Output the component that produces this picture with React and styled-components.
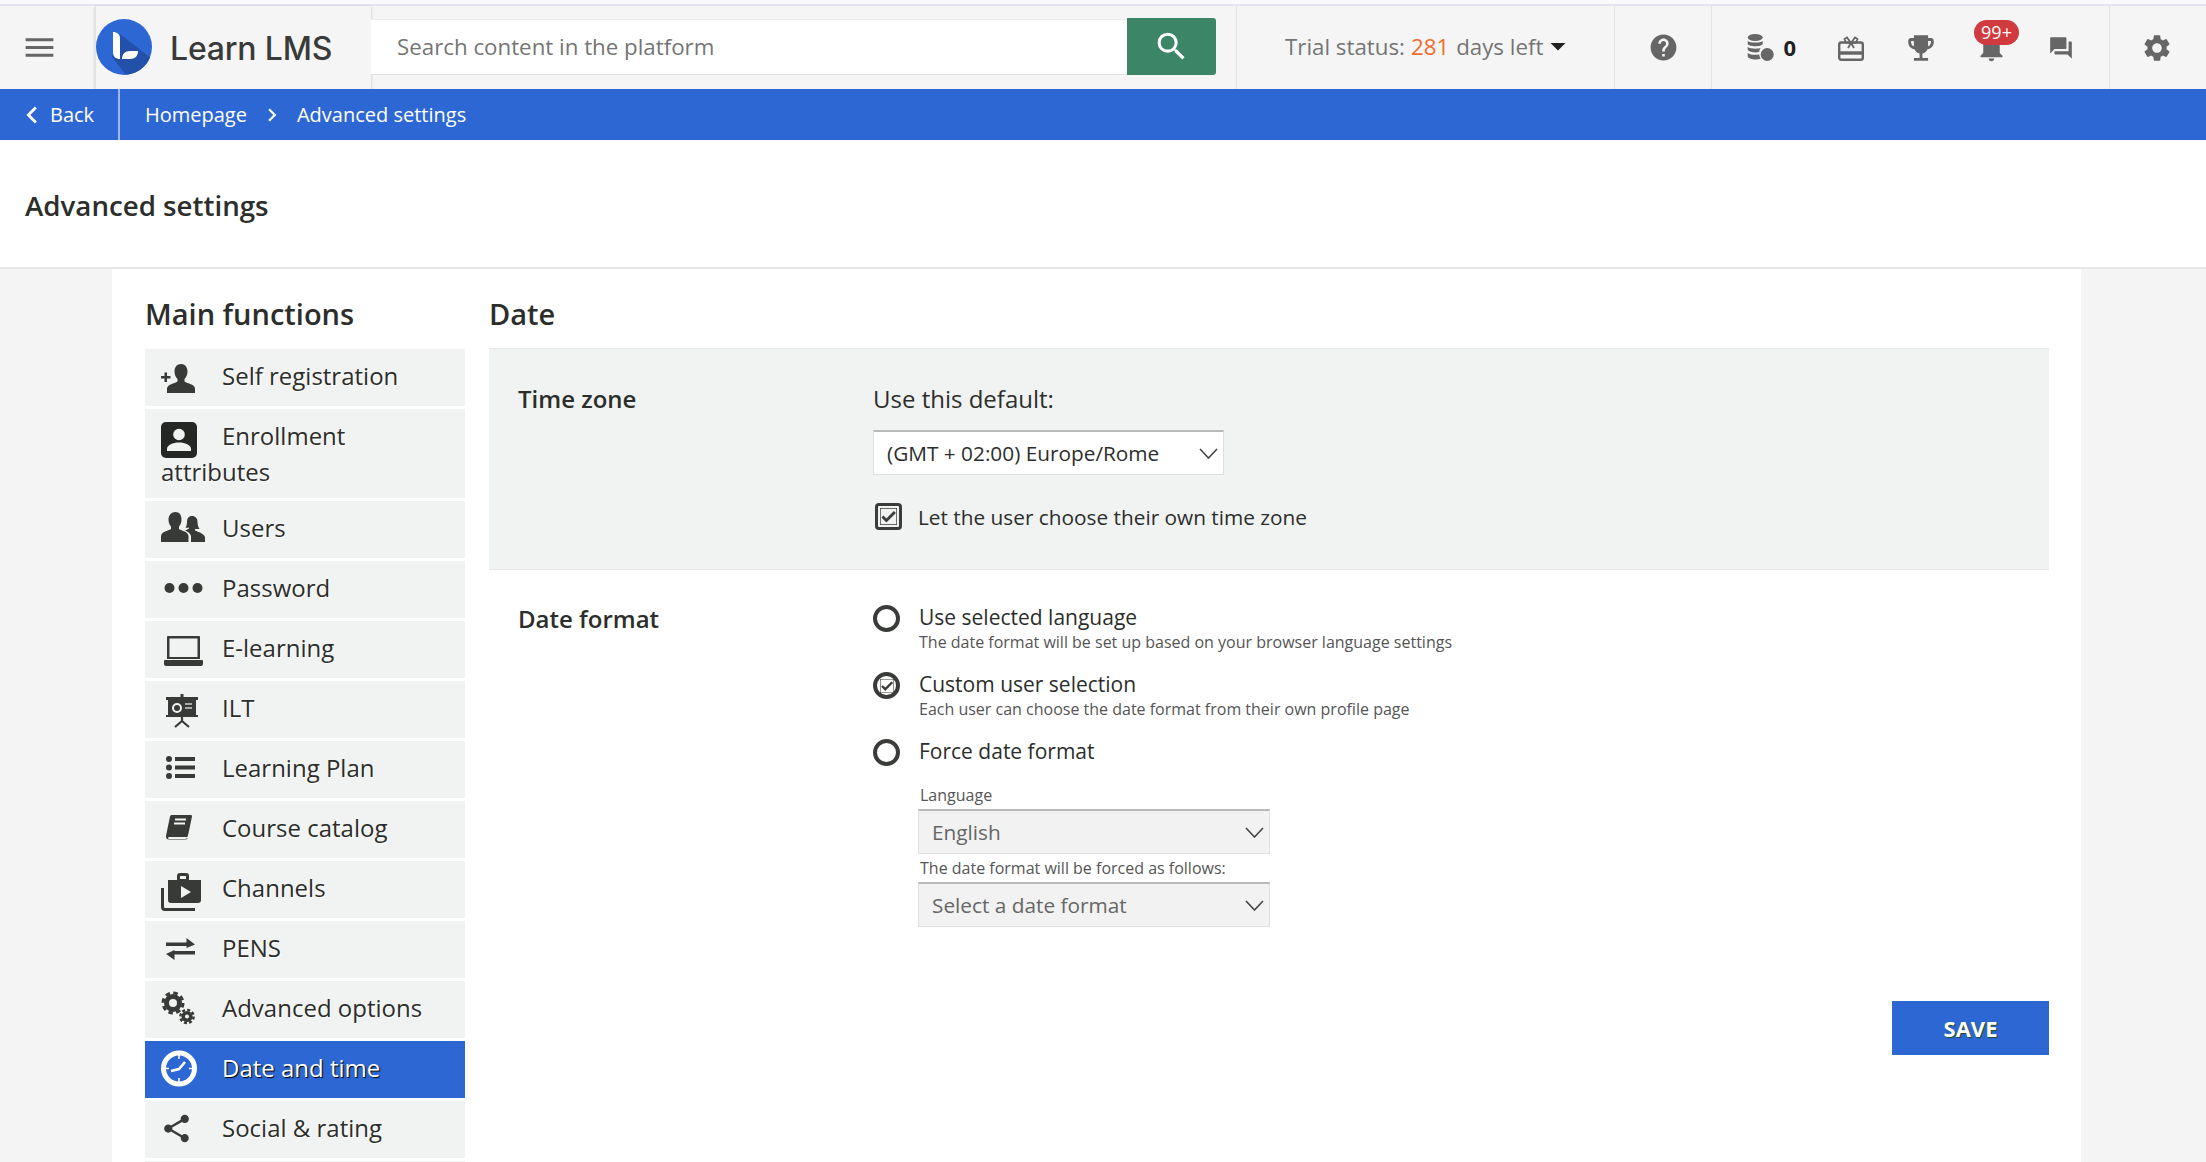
import styled, { createGlobalStyle } from "styled-components";
import {
  MdMenu,
  MdSearch,
  MdHelp,
  MdNotifications,
  MdForum,
  MdSettings,
  MdEmojiEvents,
  MdShare,
  MdCheck,
  MdArrowDropDown,
  MdChevronLeft,
  MdChevronRight,
} from "react-icons/md";

const GlobalStyle = createGlobalStyle`
  html, body {
    margin: 0;
    padding: 0;
    height: 100%;
    overflow: hidden;
    background: #f4f4f5;
  }
  * {
    box-sizing: border-box;
  }
  body {
    font-family: "Open Sans", "Liberation Sans", sans-serif;
    color: #2c2e2b;
  }
`;

const Page = styled.div`
  width: 2206px;
  height: 1162px;
  overflow: hidden;
  display: flex;
  flex-direction: column;
`;

const TopStripe = styled.div`
  height: 6px;
  flex: none;
  background: #fafafd;
  border-bottom: 2px solid #e5e5f0;
`;

const Header = styled.header`
  height: 83px;
  flex: none;
  display: flex;
  background: #f5f5f6;
`;

const MenuButton = styled.div`
  width: 95px;
  flex: none;
  display: flex;
  align-items: center;
  padding-left: 21px;
  color: #666;
`;

const LogoBox = styled.div`
  width: 276px;
  flex: none;
  display: flex;
  align-items: center;
  gap: 18px;
  padding-left: 0;
  padding-bottom: 1px;
  border-left: 1px solid #e2e2e2;
  box-shadow: 0 1px 3px rgba(0, 0, 0, 0.2);
`;

const LogoText = styled.span`
  font-family: Inter, "Open Sans", sans-serif;
  font-size: 32px;
  font-weight: 500;
  letter-spacing: -0.2px;
  color: #3a3a3a;
  padding-top: 2px;
`;

const SearchArea = styled.div`
  width: 866px;
  flex: none;
  display: flex;
  align-items: center;
  padding-right: 20px;
  padding-bottom: 2px;
  border-right: 1px solid #e4e4e4;
`;

const SearchInput = styled.div`
  flex: 1;
  height: 56px;
  background: #fff;
  border-bottom: 1px solid #e2e2e2;
  border-top: 1px solid #ececec;
  display: flex;
  align-items: center;
  padding-left: 26px;
  font-size: 22.3px;
  color: #757575;
`;

const SearchButton = styled.div`
  width: 89px;
  height: 57px;
  background: #3c8567;
  border-radius: 0 3px 3px 0;
  color: #fff;
  display: flex;
  align-items: center;
  justify-content: center;
`;

const TrialArea = styled.div`
  width: 378px;
  flex: none;
  display: flex;
  align-items: center;
  padding-left: 48px;
  padding-bottom: 3px;
  border-right: 1px solid #e4e4e4;
  font-size: 22.3px;
  color: #757575;
  white-space: nowrap;
`;

const TrialDays = styled.span`
  color: #ee6c2e;
  margin: 0 7px 0 6px;
`;

const Caret = styled.span`
  display: flex;
  color: #222;
  margin-left: -3px;
`;

const HelpArea = styled.div`
  width: 97px;
  flex: none;
  display: flex;
  align-items: center;
  justify-content: center;
  color: #666;
  border-right: 1px solid #e4e4e4;
`;

const ToolArea = styled.div`
  width: 398px;
  flex: none;
  display: flex;
  align-items: center;
  padding-left: 34px;
  color: #666;
  border-right: 1px solid #e4e4e4;
`;

const CoinGroup = styled.div`
  width: 50px;
  margin-right: 20px;
  flex: none;
  display: flex;
  align-items: center;
  gap: 9px;
`;

const CoinCount = styled.span`
  font-size: 22px;
  font-weight: 700;
  color: #1f211e;
  margin-bottom: 2px;
`;

const ToolItem = styled.div`
  width: 70px;
  flex: none;
  display: flex;
  justify-content: center;
  position: relative;
`;

const Badge = styled.span`
  position: absolute;
  top: -11px;
  left: 18px;
  width: 45px;
  height: 25px;
  border-radius: 13px;
  background: #d13a3e;
  color: #fff;
  font-size: 18px;
  line-height: 25px;
  text-align: center;
`;

const SettingsArea = styled.div`
  flex: 1;
  display: flex;
  align-items: center;
  justify-content: center;
  padding-right: 2px;
  color: #666;
`;

const BlueBar = styled.nav`
  height: 51px;
  flex: none;
  display: flex;
  align-items: center;
  background: #2d67d3;
  color: #fff;
  font-size: 20px;
`;

const BackLink = styled.div`
  width: 120px;
  height: 100%;
  flex: none;
  display: flex;
  align-items: center;
  gap: 1px;
  padding-left: 15px;
  border-right: 2px solid #9db8e8;
`;

const Crumbs = styled.div`
  display: flex;
  align-items: center;
  gap: 12px;
  padding-left: 25px;
`;

const TitleBar = styled.div`
  height: 129px;
  flex: none;
  display: flex;
  align-items: center;
  padding: 2px 0 0 25px;
  background: #fff;
  border-bottom: 2px solid #e8e8e8;
`;

const PageTitle = styled.h1`
  margin: 0;
  font-size: 27.7px;
  font-weight: 600;
`;

const Panel = styled.main`
  flex: 1;
  margin: 0 125px 0 112px;
  padding: 0 32px 0 33px;
  background: #fff;
  display: flex;
  gap: 24px;
  min-height: 0;
`;

const SideColumn = styled.aside`
  width: 320px;
  flex: none;
`;

const SectionHeading = styled.h2`
  margin: 0;
  height: 79px;
  padding-top: 27px;
  font-size: 29px;
  line-height: 36px;
  font-weight: 600;
`;

const SideList = styled.div`
  display: flex;
  flex-direction: column;
  gap: 3px;
  margin-top: 1px;
`;

const SideItem = styled.div`
  padding: 9px 12px 8px 16px;
  min-height: 57px;
  font-size: 24px;
  line-height: 36px;
  background: ${(props) => (props.$active ? "#2d67d3" : "#f1f3f3")};
  color: ${(props) => (props.$active ? "#fff" : "#2c2e2b")};
  text-shadow: ${(props) =>
    props.$active ? "1px 1px 1px #000" : "1px 1px 0 #fff"};
`;

const IconSlot = styled.span`
  display: inline-block;
  vertical-align: top;
  width: 61px;
  height: 36px;
  padding-top: ${(props) => props.$top || 0}px;
  padding-left: ${(props) => props.$left || 0}px;
  color: #383a37;

  svg {
    display: block;
    overflow: visible;
  }
`;

const MainColumn = styled.section`
  flex: 1;
  min-width: 0;
`;

const FormRow = styled.div`
  display: grid;
  grid-template-columns: 384px 1fr;
  background: ${(props) => (props.$shaded ? "#f1f3f3" : "transparent")};
  border-top: ${(props) => (props.$shaded ? "1px solid #e6e8e8" : "none")};
  border-bottom: ${(props) => (props.$shaded ? "1px solid #e6e8e8" : "none")};
  padding-top: ${(props) => props.$pad}px;
  padding-bottom: ${(props) => (props.$shaded ? 39 : 0)}px;
`;

const RowLabel = styled.div`
  padding-left: 29px;
  font-size: 24px;
  line-height: 32px;
  font-weight: 600;
`;

const FieldTitle = styled.div`
  font-size: 24px;
  line-height: 32px;
`;

const SelectBox = styled.div`
  width: ${(props) => props.$width}px;
  height: 45px;
  display: flex;
  align-items: center;
  justify-content: space-between;
  padding: 0 5px 0 ${(props) => props.$inset}px;
  border: 1px solid #e0e0e0;
  border-top: 2px solid #b9b9b9;
  background: ${(props) => (props.$muted ? "#f2f2f2" : "#fff")};
  color: ${(props) => (props.$muted ? "#666" : "#2c2e2b")};
  font-size: 20.8px;
`;

const TimezoneSelect = styled(SelectBox)`
  margin-top: 15px;
`;

const CheckRow = styled.label`
  display: flex;
  align-items: center;
  gap: 16px;
  margin-top: 28px;
  padding-left: 2px;
  font-size: 20.8px;
  line-height: 26px;
`;

const CheckBox = styled.span`
  width: 27px;
  height: 27px;
  display: flex;
  align-items: center;
  justify-content: center;
  border: 3.5px solid #3a3c39;
  border-radius: 4px;
  color: #3a3c39;

  svg {
    stroke: currentColor;
    stroke-width: 2;
  }
`;

const OptionList = styled.div`
  display: flex;
  flex-direction: column;
  gap: 17px;
`;

const Option = styled.div`
  display: grid;
  grid-template-columns: 46px 1fr;
`;

const Radio = styled.span`
  width: 27px;
  height: 27px;
  margin-top: 2px;
  display: flex;
  align-items: center;
  justify-content: center;
  border: 4px solid #3a3c39;
  border-radius: 50%;
  color: #3a3c39;

  svg {
    stroke: currentColor;
    stroke-width: 2;
  }
`;

const OptionText = styled.div`
  font-size: 21px;
  line-height: 28px;
`;

const OptionHint = styled.div`
  font-size: 16px;
  line-height: 22px;
  color: #555;
`;

const ForcedFields = styled.div`
  display: flex;
  flex-direction: column;
  margin: 15px 0 0 45px;
`;

const FieldHint = styled.div`
  padding: 3px 0 3px 2px;
  font-size: 16px;
  line-height: 22px;
  color: #555;
`;

const FooterRow = styled.div`
  display: flex;
  justify-content: flex-end;
  margin-top: 74px;
`;

const SaveButton = styled.button`
  width: 157px;
  height: 54px;
  border: 0;
  background: #2d67d3;
  color: #fff;
  font-family: inherit;
  font-size: 22px;
  font-weight: 700;
  text-shadow: 1px 1px 1px #1f4a2a;
`;

const Chevron = () => (
  <svg width="19" height="11" viewBox="0 0 19 11" fill="none" stroke="#444" strokeWidth="1.6">
    <polyline points="1,1 9.5,10 18,1" />
  </svg>
);

const Logo = () => (
  <svg width="56" height="56" viewBox="0 0 56 56">
    <defs>
      <clipPath id="logoClip">
        <circle cx="28" cy="28" r="28" />
      </clipPath>
    </defs>
    <circle cx="28" cy="28" r="28" fill="#2d67d3" />
    <polygon points="24,15 56,40 56,56 30,56 16,38" fill="#2350a8" clipPath="url(#logoClip)" />
    <path d="M17 13c4 0 7 2 7 7v20c-4 0-7-2-7-7z" fill="#fff" />
    <path d="M26 40c0-5 3-8 8-8h8c0 5-3 8-8 8z" fill="#fff" />
  </svg>
);

const CoinsIcon = () => (
  <svg width="29" height="28" viewBox="0 0 28 28" fill="currentColor">
    <ellipse cx="9" cy="3.5" rx="7.5" ry="3.5" />
    <path d="M1.5 7c2 2 13 2 15 0v3c-1 3-14 3-15 0z" />
    <path d="M1.5 13c2 2 11 2 13 1-1 1-1.500 3-1.500 4-4 1-10 0-11.500-2z" />
    <path d="M1.500 19c2 2 8 2 11.500 1.500 0 1 .5 2.500 1.500 4-4 2-12 1-13-2z" />
    <circle cx="21" cy="20.500" r="6.500" />
  </svg>
);

const GiftIcon = () => (
  <svg width="26" height="26" viewBox="0 0 26 26" fill="none" stroke="currentColor" strokeWidth="2.400">
    <rect x="1.200" y="7.500" width="23.600" height="17.300" rx="2" />
    <path d="M1.500 18h23" strokeWidth="3.500" />
    <path d="M13 8L9 2.500 6.500 4 8 7.500zM13 8l4-5.500 2.500 1.500L18 7.500zM13 8l-3 5M13 8l3 5" strokeWidth="1.800" />
  </svg>
);

const AddUserIcon = () => (
  <svg width="34" height="29" viewBox="0 0 34 29" fill="currentColor">
    <path d="M20 0c4 0 6.500 3 6.500 7.500 0 3-1.200 6-3 7.500v2.500c3 2 10.500 3 10.500 7V29H6v-4.500c0-4 7.500-5 10.500-7V15c-1.800-1.500-3-4.500-3-7.500C13.500 3 16 0 20 0z" />
    <path d="M0 12h3.500V8.500h2.500V12h3.500v2.500H6V18H3.500v-3.500H0z" />
  </svg>
);

const ProfileIcon = () => (
  <svg width="36" height="36" viewBox="0 0 36 36">
    <rect width="36" height="36" rx="5" fill="#252724" />
    <circle cx="18" cy="12.500" r="5.800" fill="#f1f3f3" />
    <path d="M6 29v-2c0-4 6-6.500 12-6.500S30 23 30 27v2z" fill="#f1f3f3" />
  </svg>
);

const UsersIcon = () => (
  <svg width="44" height="30" viewBox="0 0 44 30" fill="currentColor">
    <path d="M14.500 0c4 0 6 3 6 7.500 0 3-1 5.500-2.500 7v2.500c3 2 9 2.500 9.500 7v6H0v-6c.5-4.500 7-5 10-7v-2.500C8.500 13 7.500 10.500 7.500 7.500 7.500 3 10.500 0 14.500 0z" />
    <path d="M31 4c3.500 0 5.500 2.500 5.500 6 0 3 1 5.500 2 7h-4.500v1.500c3 1.500 9.500 3 10 7V30H30v-6c-.5-2.500-3-4.500-6-5.500 1.500-.5 3-1.200 4-2v-1c-1 .2-2.500.5-3.500.3 1-1.500 1.500-4 1.500-5.800C26 6.500 27.500 4 31 4z" />
  </svg>
);

const DotsIcon = () => (
  <svg width="39" height="12" viewBox="0 0 39 12" fill="currentColor">
    <circle cx="5.500" cy="6" r="5" />
    <circle cx="19.500" cy="6" r="5" />
    <circle cx="33.500" cy="6" r="5" />
  </svg>
);

const LaptopIcon = () => (
  <svg width="39" height="30" viewBox="0 0 39 30" fill="currentColor">
    <path d="M4 0h31a1 1 0 0 1 1 1v22H3V1a1 1 0 0 1 1-1zm1.500 2.500V21h28V2.500z" fillRule="evenodd" />
    <path d="M1 24h37a1 1 0 0 1 1 1v3a2 2 0 0 1-2 2H2a2 2 0 0 1-2-2v-3a1 1 0 0 1 1-1z" />
  </svg>
);

const BoardIcon = () => (
  <svg width="32" height="33" viewBox="0 0 32 33">
    <rect x="14.500" y="0" width="3" height="4" fill="currentColor" />
    <rect x="0" y="3" width="32" height="3" fill="currentColor" />
    <rect x="2" y="5" width="28" height="17" fill="currentColor" />
    <circle cx="11" cy="14" r="4" fill="none" stroke="#f1f3f3" strokeWidth="2" />
    <path d="M19 10h7M19 14h7" stroke="#aaa" strokeWidth="1.800" />
    <path d="M0 22h32M16 22v5M16 27l-7 6M16 27l7 6" stroke="currentColor" strokeWidth="2.200" />
  </svg>
);

const ListIcon = () => (
  <svg width="29" height="23" viewBox="0 0 29 23" fill="currentColor">
    <circle cx="3" cy="3" r="3" />
    <circle cx="3" cy="11.500" r="3" />
    <circle cx="3" cy="20" r="3" />
    <rect x="9" y="1" width="20" height="4" />
    <rect x="9" y="9.500" width="20" height="4" />
    <rect x="9" y="18" width="20" height="4" />
  </svg>
);

const BookIcon = () => (
  <svg width="26" height="25" viewBox="0 0 26 25" fill="currentColor">
    <path d="M6 0h19c1 0 1 1 1 1.500l-4 19c-.3 1-.7 1.500-2 1.500H4c-1 0-2 .3-2 1s1 1 2 1h15c1 0 1.500-.5 2-1l.5.5c-.5 .8-1.500 1-2.500 1H3c-2 0-3-1-3-3 0-.6.1-1 .2-1.500L4 1.500C4.200.5 5 0 6 0z" />
    <path d="M9 4.500h11M8 8.500h11" stroke="#f1f3f3" strokeWidth="1.800" />
  </svg>
);

const ChannelsIcon = () => (
  <svg width="40" height="38" viewBox="0 0 40 38">
    <path d="M1.500 15v19a2.500 2.500 0 0 0 2.500 2.500h30" fill="none" stroke="currentColor" strokeWidth="3" />
    <path d="M16 7V3a3 3 0 0 1 3-3h6a3 3 0 0 1 3 3v4h12v20a3 3 0 0 1-3 3H10a3 3 0 0 1-3-3V7zm3-1h6V3h-6z" fill="currentColor" fillRule="evenodd" />
    <path d="M20 13l10 6-10 6z" fill="#f1f3f3" />
  </svg>
);

const SwapIcon = () => (
  <svg width="29" height="22" viewBox="0 0 29 22" fill="currentColor">
    <path d="M0 4.500h20.500V0L29 6.500 20.500 10V8H0z" />
    <path d="M29 13H8.500v-1L0 16l8.500 6v-5.500H29z" />
  </svg>
);

const GearsIcon = () => (
  <svg width="34" height="32" viewBox="0 0 34 32" fill="none" stroke="currentColor">
    <circle cx="12" cy="11" r="6.500" strokeWidth="5" />
    <circle cx="12" cy="11" r="10" strokeWidth="3" strokeDasharray="4.500 3.350" />
    <circle cx="26" cy="24.500" r="3.800" strokeWidth="3.500" />
    <circle cx="26" cy="24.500" r="6.600" strokeWidth="2.500" strokeDasharray="3 2.180" />
  </svg>
);

const ClockIcon = () => (
  <svg width="36" height="37" viewBox="0 0 36 37" fill="none" stroke="#fff">
    <circle cx="18" cy="18.500" r="15.500" strokeWidth="5" />
    <path d="M10 21l8-2 6-7" strokeWidth="2.600" />
    <path d="M18 3v6M18 28v6M3 18.500h5M28 18.500h5" strokeWidth="1.500" />
  </svg>
);

const menuItems = [
  { label: "Self registration", icon: <AddUserIcon />, top: 6 },
  { label: "Enrollment attributes", icon: <ProfileIcon />, top: 4 },
  { label: "Users", icon: <UsersIcon />, top: 2 },
  { label: "Password", icon: <DotsIcon />, top: 12, left: 3 },
  { label: "E-learning", icon: <LaptopIcon />, top: 6, left: 3 },
  { label: "ILT", icon: <BoardIcon />, top: 4, left: 5 },
  { label: "Learning Plan", icon: <ListIcon />, top: 6, left: 5 },
  { label: "Course catalog", icon: <BookIcon />, top: 5, left: 5 },
  { label: "Channels", icon: <ChannelsIcon />, top: 3 },
  { label: "PENS", icon: <SwapIcon />, top: 8, left: 5 },
  { label: "Advanced options", icon: <GearsIcon />, top: 2 },
  { label: "Date and time", icon: <ClockIcon />, top: 0, active: true },
  { label: "Social & rating", icon: <MdShare size={33} style={{ margin: "-4px 0 0 -4px" }} />, top: 6, left: 3 },
  { label: "", icon: null },
];

const App = () => {
  return (
    <Page>
      <GlobalStyle />
      <TopStripe />
      <Header>
        <MenuButton>
          <MdMenu size={37} />
        </MenuButton>
        <LogoBox>
          <Logo />
          <LogoText>Learn LMS</LogoText>
        </LogoBox>
        <SearchArea>
          <SearchInput>Search content in the platform</SearchInput>
          <SearchButton>
            <MdSearch size={37} />
          </SearchButton>
        </SearchArea>
        <TrialArea>
          Trial status:<TrialDays>281</TrialDays>days left
          <Caret>
            <MdArrowDropDown size={36} />
          </Caret>
        </TrialArea>
        <HelpArea>
          <MdHelp size={31} />
        </HelpArea>
        <ToolArea>
          <CoinGroup>
            <CoinsIcon />
            <CoinCount>0</CoinCount>
          </CoinGroup>
          <ToolItem>
            <GiftIcon />
          </ToolItem>
          <ToolItem>
            <MdEmojiEvents size={34} />
          </ToolItem>
          <ToolItem>
            <MdNotifications size={33} />
            <Badge>99+</Badge>
          </ToolItem>
          <ToolItem>
            <MdForum size={26} />
          </ToolItem>
        </ToolArea>
        <SettingsArea>
          <MdSettings size={32} />
        </SettingsArea>
      </Header>
      <BlueBar>
        <BackLink>
          <MdChevronLeft size={34} />
          Back
        </BackLink>
        <Crumbs>
          <span>Homepage</span>
          <MdChevronRight size={26} />
          <span>Advanced settings</span>
        </Crumbs>
      </BlueBar>
      <TitleBar>
        <PageTitle>Advanced settings</PageTitle>
      </TitleBar>
      <Panel>
        <SideColumn>
          <SectionHeading>Main functions</SectionHeading>
          <SideList>
            {menuItems.map((item, i) => (
              <SideItem key={i} $active={item.active}>
                <IconSlot $top={item.top} $left={item.left}>
                  {item.icon}
                </IconSlot>
                {item.label}
              </SideItem>
            ))}
          </SideList>
        </SideColumn>
        <MainColumn>
          <SectionHeading>Date</SectionHeading>
          <FormRow $shaded $pad={34}>
            <RowLabel>Time zone</RowLabel>
            <div>
              <FieldTitle>Use this default:</FieldTitle>
              <TimezoneSelect $width={351} $inset={13}>
                (GMT + 02:00) Europe/Rome
                <Chevron />
              </TimezoneSelect>
              <CheckRow>
                <CheckBox>
                  <MdCheck size={17} />
                </CheckBox>
                Let the user choose their own time zone
              </CheckRow>
            </div>
          </FormRow>
          <FormRow $pad={33}>
            <RowLabel>Date format</RowLabel>
            <OptionList>
              <Option>
                <Radio />
                <div>
                  <OptionText>Use selected language</OptionText>
                  <OptionHint>The date format will be set up based on your browser language settings</OptionHint>
                </div>
              </Option>
              <Option>
                <Radio>
                  <MdCheck size={14} />
                </Radio>
                <div>
                  <OptionText>Custom user selection</OptionText>
                  <OptionHint>Each user can choose the date format from their own profile page</OptionHint>
                </div>
              </Option>
              <div>
                <Option>
                  <Radio />
                  <OptionText>Force date format</OptionText>
                </Option>
                <ForcedFields>
                  <FieldHint>Language</FieldHint>
                  <SelectBox $width={352} $inset={13} $muted>
                    English
                    <Chevron />
                  </SelectBox>
                  <FieldHint>The date format will be forced as follows:</FieldHint>
                  <SelectBox $width={352} $inset={13} $muted>
                    Select a date format
                    <Chevron />
                  </SelectBox>
                </ForcedFields>
              </div>
            </OptionList>
          </FormRow>
          <FooterRow>
            <SaveButton>SAVE</SaveButton>
          </FooterRow>
        </MainColumn>
      </Panel>
    </Page>
  );
};

export default App;
